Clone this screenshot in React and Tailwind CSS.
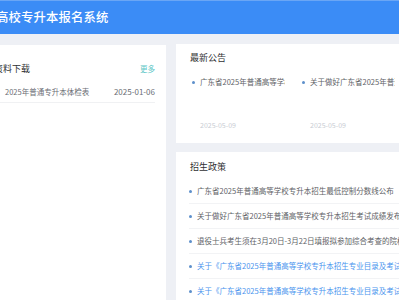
const notices = [
  { title: "广东省2025年普通高等学校专升本招生最低控制分数线公布", date: "2025-05-09" },
  { title: "关于做好广东省2025年普通高等学校专升本招生考试成绩发布工作的通知", date: "2025-05-09" }
];

const policies = [
  { title: "广东省2025年普通高等学校专升本招生最低控制分数线公布", link: false },
  { title: "关于做好广东省2025年普通高等学校专升本招生考试成绩发布工作的通知", link: false },
  { title: "退役士兵考生须在3月20日-3月22日填报拟参加综合考查的院校", link: false },
  { title: "关于《广东省2025年普通高等学校专升本招生专业目录及考试科目》的公告", link: true },
  { title: "关于《广东省2025年普通高等学校专升本招生专业目录及考试科目》的补充公告", link: true }
];

const Dot = ({ className = "" }) => (
  <span className={`h-[3px] w-[3px] shrink-0 rounded-full bg-[#5d8fcb] ${className}`} />
);

const App = () => {
  return (
    <div className="h-[300px] w-[399px] overflow-hidden bg-[#eef0f5] font-['Noto_Sans_CJK_SC',sans-serif]">
      <header className="flex h-[34px] items-center border-t border-[#6aa6f5] bg-[#3b8cf6]">
        <h1 className="-ml-[4px] whitespace-nowrap text-[12.3px] font-medium tracking-[0.2px] text-white">
          高校专升本报名系统
        </h1>
      </header>

      <div className="-ml-[23px] flex gap-[10px] pt-[11px]">
        <section className="h-[300px] w-[189px] shrink-0 bg-white pl-[20px] pr-[11px] pt-[18px]">
          <div className="flex items-center justify-between">
            <h2 className="-ml-[3px] text-[9px] leading-[12px] text-[#303133]">资料下载</h2>
            <span className="text-[7.5px] leading-[12px] text-[#5cc6c6]">更多</span>
          </div>
          <div className="mt-[6px] flex h-[22px] items-center border-b border-[#f0f1f3]">
            <Dot />
            <span className="ml-[5px] flex-1 whitespace-nowrap text-[7.5px] text-[#6b6e75]">
              2025年普通专升本体检表
            </span>
            <span className="whitespace-nowrap text-[8px] text-[#6b6e75]">2025-01-06</span>
          </div>
        </section>

        <div className="flex w-[320px] shrink-0 flex-col gap-[9px]">
          <section className="-mt-px h-[99px] bg-white px-[14px] pt-[7px]">
            <h2 className="text-[9px] leading-[14px] text-[#303133]">最新公告</h2>
            <div className="mt-[12px] flex">
              {notices.map((item) => (
                <div key={item.title} className="flex h-[53px] w-[110px] flex-col justify-between pl-[2px]">
                  <div className="flex items-center">
                    <Dot />
                    <span className="ml-[5px] w-[85px] overflow-hidden whitespace-nowrap text-[7.5px] leading-[10px] text-[#606266]">
                      {item.title}
                    </span>
                  </div>
                  <span className="pl-[8px] text-[7px] leading-[10px] text-[#c8ccd3]">{item.date}</span>
                </div>
              ))}
            </div>
          </section>

          <section className="h-[200px] bg-white px-[14px] pt-[9px]">
            <h2 className="text-[9px] leading-[12px] text-[#303133]">招生政策</h2>
            <ul className="-ml-px mt-[6px]">
              {policies.map((item) => (
                <li key={item.title} className="flex h-[25px] items-center border-b border-[#f2f3f5]">
                  <Dot />
                  <span
                    className={`ml-[5px] overflow-hidden whitespace-nowrap text-[7.5px] ${
                      item.link ? "text-[#4a94ee]" : "text-[#606266]"
                    }`}
                  >
                    {item.title}
                  </span>
                </li>
              ))}
            </ul>
          </section>
        </div>
      </div>
    </div>
  );
};

export default App;
